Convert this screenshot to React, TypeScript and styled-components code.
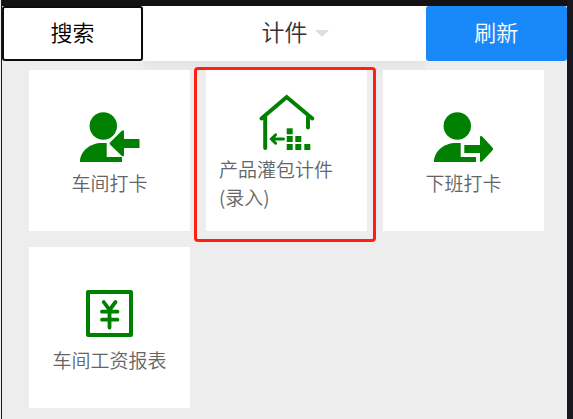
import React from "react";
import styled, { createGlobalStyle } from "styled-components";

const GlobalStyle = createGlobalStyle`
  *, *::before, *::after { box-sizing: border-box; }
  html, body, #root { height: 100%; }
  body {
    margin: 0;
    background: #ededed;
    font-family: "Noto Sans CJK SC DemiLight", "Noto Sans CJK SC", "Noto Sans", sans-serif;
  }
  button { font-family: inherit; font-weight: 350; }
`;

const Screen = styled.div`
  min-height: 100%;
  margin-left: 1px;
  border-left: 1px solid #14183a;
  border-right: 6px solid #171720;
  background: #ededed;
`;

const StatusStrip = styled.div`
  height: 6px;
  background: #131112;
`;

const Toolbar = styled.header`
  display: grid;
  grid-template-columns: 1fr 2fr 1fr;
  height: 55px;
`;

const ToolbarButton = styled.button<{ $primary?: boolean }>`
  padding: 0 0 6px;
  border: ${(p) => (p.$primary ? "0" : "2px solid #0c0c0c")};
  border-radius: 3px;
  background: ${(p) => (p.$primary ? "#1989fa" : "#fff")};
  color: ${(p) => (p.$primary ? "#fff" : "#000")};
  font-size: 22px;
  line-height: 32px;
  cursor: pointer;
`;

const TitleButton = styled.button`
  display: grid;
  grid-template-columns: 1fr auto 1fr;
  align-items: center;
  column-gap: 7px;
  padding: 0 0 6px;
  border: 0;
  background: #fff;
  box-shadow: 0 2px 16px rgba(0, 0, 0, 0.08);
  clip-path: inset(0 0 -16px 0);
  color: #323233;
  font-size: 23px;
  line-height: 32px;
  cursor: pointer;
`;

const TitleText = styled.span`
  grid-column: 2;
`;

const Caret = styled.span`
  justify-self: start;
  margin-top: 6px;
  border: 7px solid transparent;
  border-top-color: #dcdee0;
  border-bottom: 0;
`;

const Tiles = styled.main`
  display: grid;
  grid-template-columns: repeat(3, 1fr);
  gap: 16px;
  padding: 9px 23px 10px 27px;
`;

const Tile = styled.button`
  position: relative;
  display: flex;
  flex-direction: column;
  align-items: center;
  justify-content: center;
  aspect-ratio: 1;
  padding: 0 13px;
  border: 0;
  background: #fff;
  color: #646566;
  cursor: pointer;
`;

const TileIcon = styled.svg`
  flex: none;
  width: 65px;
  height: 65px;
  color: #008000;
`;

const TileLabel = styled.span`
  font-size: 19px;
  line-height: 28px;
  text-align: left;
`;

const Highlight = styled.span`
  position: absolute;
  inset: -3px -9px -11px -12px;
  border: 3px solid #ff2013;
  border-radius: 4px;
  pointer-events: none;
`;

const Person = () => (
  <>
    <circle cx="26.3" cy="22" r="13.7" />
    <path d="M3 58C3 47 13 39 25 39H29.7V53H45V58Z" />
  </>
);

const ClockInIcon = () => (
  <TileIcon viewBox="0 0 65 65" fill="currentColor" aria-hidden="true">
    <Person />
    <path d="M33 38.6 44.6 26.9Q47 25.3 47 28V35H62.5V44H47V51Q47 53.4 44.6 51.8L33 40.4Q32.2 39.5 33 38.6Z" />
  </TileIcon>
);

const ClockOutIcon = () => (
  <TileIcon viewBox="0 0 65 65" fill="currentColor" aria-hidden="true">
    <Person />
    <path d="M33.3 41H49V33Q49.2 31.3 51 32.2L61.6 43.8Q62.6 45 61.6 46.2L51 57.6Q49.2 58.6 49 57V49H33.3Z" />
  </TileIcon>
);

const WarehouseIcon = () => (
  <TileIcon viewBox="0 0 65 65" fill="none" stroke="currentColor" strokeLinecap="round" aria-hidden="true">
    <path d="M7.5 28.5 32.7 7 58.3 28.5M11.2 27V58M54 27V37.5" strokeWidth="4" />
    <path d="M29.5 49H17.5M21.6 44.8 17.4 49 21.6 53.2" strokeWidth="3" />
    <g fill="currentColor" stroke="none">
      <rect x="32.7" y="38.3" width="6" height="6" />
      <rect x="32.7" y="46" width="6" height="6" />
      <rect x="32.7" y="54" width="6" height="6" />
      <rect x="41.3" y="46" width="6" height="6" />
      <rect x="41.3" y="54" width="6" height="6" />
      <rect x="50.3" y="54" width="6" height="6" />
    </g>
  </TileIcon>
);

const PayReportIcon = () => (
  <TileIcon
    viewBox="0 0 65 65"
    fill="none"
    stroke="currentColor"
    strokeWidth="4"
    strokeLinecap="round"
    strokeLinejoin="round"
    aria-hidden="true"
  >
    <rect x="11" y="11" width="43" height="43" />
    <path d="M26.7 21 32.5 29 38.5 21M32.5 29V46.5M25 30.7H40.5M25 38.7H40.5" strokeWidth="3.8" />
  </TileIcon>
);

const tiles = [
  { label: "车间打卡", Icon: ClockInIcon, highlighted: false },
  { label: "产品灌包计件(录入)", Icon: WarehouseIcon, highlighted: true },
  { label: "下班打卡", Icon: ClockOutIcon, highlighted: false },
  { label: "车间工资报表", Icon: PayReportIcon, highlighted: false },
];

export default function App() {
  return (
    <>
      <GlobalStyle />
      <Screen>
        <StatusStrip />
        <Toolbar>
          <ToolbarButton type="button">搜索</ToolbarButton>
          <TitleButton type="button" aria-haspopup="menu">
            <TitleText>计件</TitleText>
            <Caret />
          </TitleButton>
          <ToolbarButton type="button" $primary>
            刷新
          </ToolbarButton>
        </Toolbar>
        <Tiles>
          {tiles.map(({ label, Icon, highlighted }) => (
            <Tile type="button" key={label}>
              <Icon />
              <TileLabel>{label}</TileLabel>
              {highlighted && <Highlight />}
            </Tile>
          ))}
        </Tiles>
      </Screen>
    </>
  );
}
